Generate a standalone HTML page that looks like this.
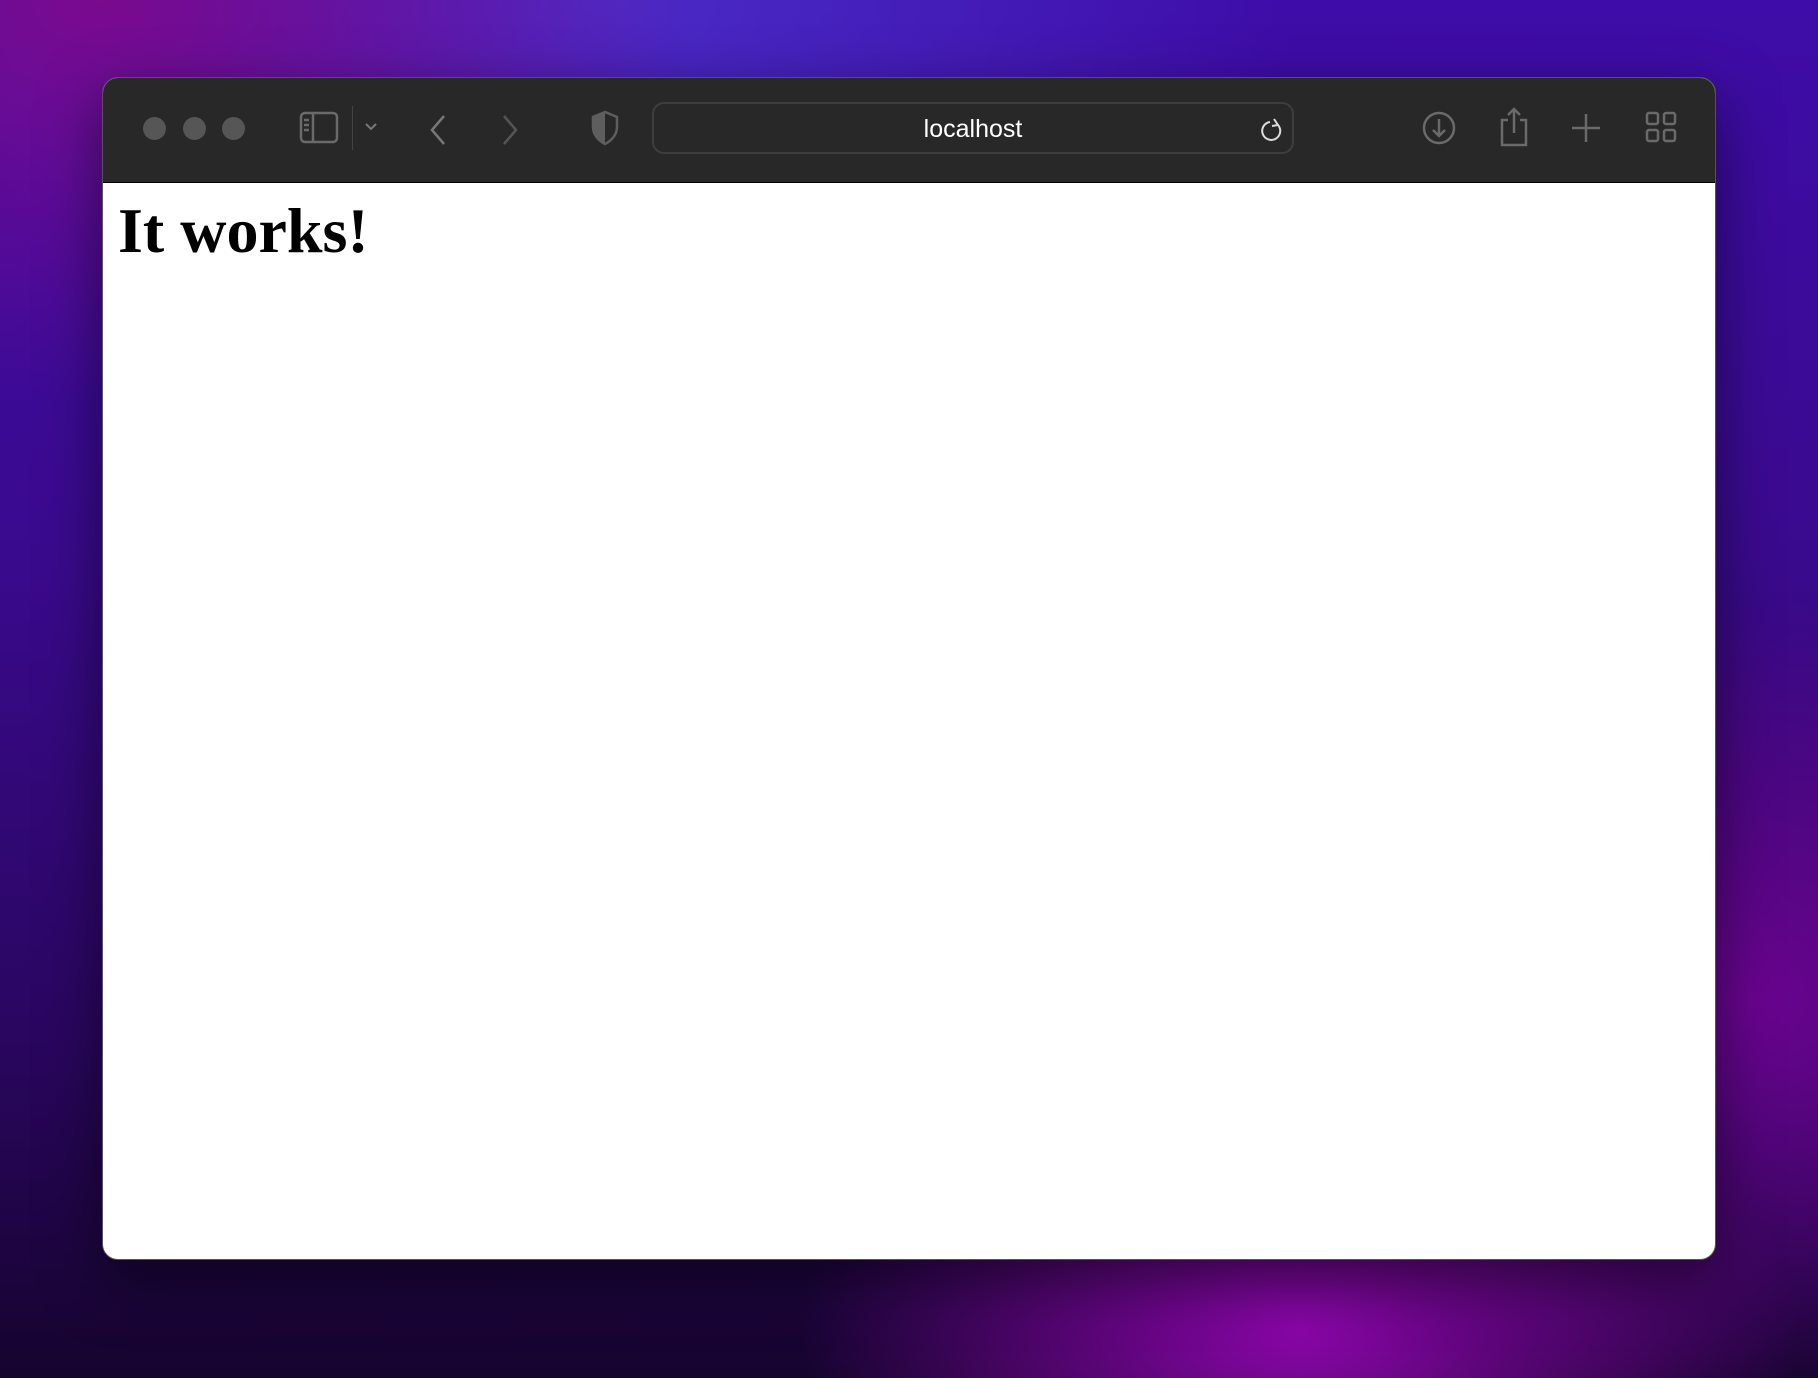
<!DOCTYPE html>
<html><head><style>
html,body{margin:0;padding:0;width:1818px;height:1378px;overflow:hidden}
body{position:relative;background:
radial-gradient(ellipse 500px 300px at 1300px 1330px,#8a06a8 0%,rgba(138,6,168,0) 100%),
radial-gradient(ellipse 500px 400px at 1750px 1000px,#6a0490 0%,rgba(106,4,144,0) 100%),
radial-gradient(ellipse 600px 400px at 100px 0px,#7a0a8e 0%,rgba(122,10,142,0) 100%),
radial-gradient(ellipse 700px 350px at 600px 0px,#4a2cc8 0%,rgba(74,44,200,0) 100%),
linear-gradient(180deg,#3e0ca8 0%,#3a0a8e 40%,#2a0660 75%,#16042e 100%);}
.win{position:absolute;left:102px;top:77px;width:1612px;height:1181px;border-radius:16px;background:#fff;overflow:hidden;box-shadow:0 20px 60px rgba(0,0,0,.5);border:1px solid #555}
.bar{position:absolute;left:0;top:0;right:0;height:104px;background:#282828;border-bottom:1px solid #000}
.dot{position:absolute;top:39px;width:23px;height:23px;border-radius:50%;background:#565656}
.url{position:absolute;left:549px;top:24px;width:642px;height:52px;border:2px solid #3e3e3e;border-radius:12px;box-sizing:border-box}
.url span{position:absolute;left:0;right:0;top:11px;text-align:center;color:#fff;font:25px "Liberation Sans",sans-serif}
svg{position:absolute}
h1{position:absolute;left:16px;margin:0;font:bold 64px "Liberation Serif",serif;color:#000;line-height:1}
</style></head><body>
<div class="win">
<div class="bar">
<div class="dot" style="left:40px"></div><div class="dot" style="left:80px"></div><div class="dot" style="left:119px"></div>
<svg style="left:196px;top:33px" width="40" height="34" viewBox="0 0 40 34" fill="none" stroke="#6a6a6a" stroke-width="2.5"><rect x="2" y="2" width="36" height="29" rx="4"/><line x1="14" y1="2" x2="14" y2="31"/><line x1="5" y1="9" x2="10" y2="9"/><line x1="5" y1="14" x2="10" y2="14"/><line x1="5" y1="19" x2="10" y2="19"/></svg>
<div style="position:absolute;left:249px;top:28px;width:1px;height:44px;background:#444"></div>
<svg style="left:261px;top:44px" width="14" height="10" viewBox="0 0 14 10" fill="none" stroke="#777" stroke-width="2"><path d="M2 2l5 5 5-5"/></svg>
<svg style="left:325px;top:36px" width="20" height="32" viewBox="0 0 20 32" fill="none" stroke="#777" stroke-width="2.5"><path d="M16 2L4 16l12 14"/></svg>
<svg style="left:397px;top:36px" width="20" height="32" viewBox="0 0 20 32" fill="none" stroke="#555" stroke-width="2.5"><path d="M4 2l12 14L4 30"/></svg>
<svg style="left:487px;top:32px" width="30" height="36" viewBox="0 0 30 36"><path d="M15 2L3 7v10c0 8 6 14 12 17 6-3 12-9 12-17V7z" fill="none" stroke="#5e5e5e" stroke-width="2.5"/><path d="M15 2L3 7v10c0 8 6 14 12 17z" fill="#5e5e5e"/></svg>
<div class="url"><span>localhost</span>
<svg style="left:606px;top:12px" width="24" height="28" viewBox="0 0 24 28" fill="none" stroke="#ddd" stroke-width="2"><path d="M18 9A9 9 0 1 1 10 6"/><path d="M14 3l4 6-6 1"/></svg></div>
<svg style="left:1318px;top:32px" width="36" height="36" viewBox="0 0 36 36" fill="none" stroke="#6a6a6a" stroke-width="2.5"><circle cx="18" cy="18" r="15"/><path d="M18 9v17M12 20l6 6 6-6"/></svg>
<svg style="left:1394px;top:28px" width="34" height="42" viewBox="0 0 34 42" fill="none" stroke="#6a6a6a" stroke-width="2.5"><path d="M11 14H5v25h24V14h-6M17 3v24M11 9l6-6 6 6"/></svg>
<svg style="left:1468px;top:35px" width="30" height="30" viewBox="0 0 30 30" fill="none" stroke="#6a6a6a" stroke-width="2.5"><path d="M15 1v28M1 15h28"/></svg>
<svg style="left:1542px;top:33px" width="32" height="32" viewBox="0 0 32 32" fill="none" stroke="#6a6a6a" stroke-width="2.5"><rect x="2" y="2" width="11" height="11" rx="2"/><rect x="19" y="2" width="11" height="11" rx="2"/><rect x="2" y="19" width="11" height="11" rx="2"/><rect x="19" y="19" width="11" height="11" rx="2"/></svg>
</div>
<h1 style="top:121px;left:15px">It works!</h1>
</div>
</body></html>
